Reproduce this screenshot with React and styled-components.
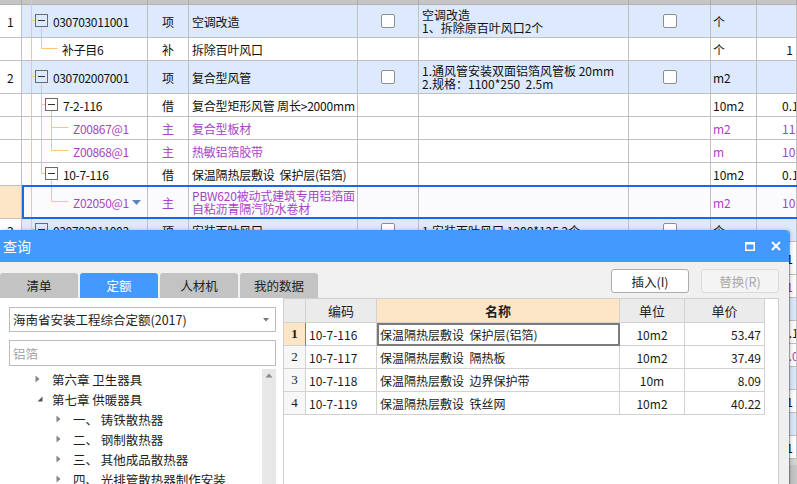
import React from "react";
import styled, { createGlobalStyle, css } from "styled-components";

const GlobalStyle = createGlobalStyle`
  html, body { margin: 0; padding: 0; background: #fff; }
  body {
    font-family: "Noto Sans CJK SC", "Noto Sans", sans-serif;
    overflow: hidden;
  }
  * { box-sizing: border-box; }
`;

const Screen = styled.div`
  position: relative;
  width: 797px;
  height: 484px;
  overflow: hidden;
  background: #fff;
`;

// ---------- background bill grid ----------
const COLS = "22px 126px 41px 169px 61px 210px 82px 46px 40px";
const LINE = "#c0c0c0";
const PURPLE = "#a545c4";

const Sheet = styled.div`
  display: flex;
  flex-direction: column;
  width: 797px;
  font-size: 12px;
  color: #111;
`;

const HeadRow = styled.div`
  display: grid;
  grid-template-columns: ${COLS};
  height: 5px;
  background: #c5c5c5;
`;

const HeadCell = styled.div`
  position: relative;
  border-right: 1px solid #a9a9a9;
  border-bottom: 1px solid #b3b3b3;
`;

const Row = styled.div`
  position: relative;
  display: grid;
  grid-template-columns: ${COLS};
  height: ${(p) => p.$h}px;
  background: ${(p) => (p.$blue ? "#dde9fc" : p.$sel ? "#fbfbfd" : "#fff")};
  ${(p) =>
    p.$sel &&
    css`
      &::after {
        content: "";
        position: absolute;
        left: 22px;
        right: -2px;
        top: -1px;
        bottom: 0;
        border: 2px solid #1769e9;
        pointer-events: none;
      }
    `}
`;

const Cell = styled.div`
  position: relative;
  display: flex;
  align-items: center;
  justify-content: ${(p) =>
    p.$align === "center" ? "center" : p.$align === "right" ? "flex-end" : "flex-start"};
  padding: 0 ${(p) => p.$pr ?? 3}px 0 ${(p) => p.$pl ?? 3}px;
  border-right: 1px solid ${LINE};
  border-bottom: 1px solid ${LINE};
  color: ${(p) => (p.$purple ? PURPLE : "#111")};
  white-space: pre;
  line-height: 13px;
  overflow: hidden;
`;

const CodeCell = styled(Cell)`
  letter-spacing: -0.35px;
`;

const NameCell = styled(Cell)`
  letter-spacing: -0.2px;
`;

const NumCell = styled(Cell)`
  background: ${(p) => (p.$sel ? "#fde6c8" : "#fff")};
  padding-left: 7px;
`;

const GuideSvg = styled.svg`
  position: absolute;
  left: 0;
  top: 0;
  overflow: visible;
  pointer-events: none;
`;

const Checkbox = styled.span`
  width: 14px;
  height: 14px;
  border: 1px solid #8e8e8e;
  border-radius: 2px;
  background: #fff;
`;

const GridFooter = styled.div`
  height: 30px;
  background: #c6c6c6;
  border-top: 6px solid #d4d4d4;
`;

const TREE_PAD = { root: 31, leaf: 40, sub: 41, subLast: 41, mat: 51, matLast: 51, matEnd: 51 };

function TreeGuide({ kind, h }) {
  const m = Math.floor((h - 1) / 2) - 0.5;
  const B = h;
  const bb = m + 6.5;
  const specs = {
    head: { segs: [[9, 0, 9, B]] },
    root: { segs: [[9, 0, 9, B], [9, m, 13, m], [19, bb, 19, B]], box: 13 },
    leaf: { segs: [[9, 0, 9, B], [19, 0, 19, m], [19, m, 35, m]] },
    sub: { segs: [[9, 0, 9, B], [19, 0, 19, B], [19, m, 23, m], [29, bb, 29, B]], box: 23 },
    subLast: { segs: [[9, 0, 9, B], [19, 0, 19, m], [19, m, 23, m], [29, bb, 29, B]], box: 23 },
    mat: { segs: [[9, 0, 9, B], [19, 0, 19, B], [29, 0, 29, B], [29, m, 46, m]] },
    matLast: { segs: [[9, 0, 9, B], [19, 0, 19, B], [29, 0, 29, m], [29, m, 46, m]] },
    matEnd: { segs: [[9, 0, 9, B], [29, 0, 29, m], [29, m, 46, m]] },
  };
  const s = specs[kind];
  return (
    <GuideSvg width="126" height={h}>
      {s.segs.map(([x1, y1, x2, y2], i) => (
        <line key={i} x1={x1 + 0.5} y1={y1} x2={x2 + 0.5} y2={y2} stroke="#ffc57a" strokeWidth="1" />
      ))}
      {s.box != null && (
        <g>
          <rect x={s.box + 0.5} y={m - 6} width="12" height="12" fill="none" stroke="#6b6b6b" />
          <line x1={s.box + 3} y1={m} x2={s.box + 10} y2={m} stroke="#333" />
        </g>
      )}
    </GuideSvg>
  );
}

const DropArrow = () => (
  <svg width="9" height="5" viewBox="0 0 9 5" style={{ marginLeft: "auto", flex: "none" }}>
    <polygon points="0,0 9,0 4.5,5" fill="#5b89bd" />
  </svg>
);

const bill = [
  { h: 33, num: "1", blue: true, tree: "root", code: "030703011001", type: "项", name: "空调改造", c1: true, desc: "空调改造\n1、拆除原百叶风口2个", c2: true, unit: "个" },
  { h: 23, tree: "leaf", code: "补子目6", type: "补", name: "拆除百叶风口", unit: "个", qty: "1", qtyEnd: true },
  { h: 33, num: "2", blue: true, tree: "root", code: "030702007001", type: "项", name: "复合型风管", c1: true, desc: "1.通风管安装双面铝箔风管板 20mm\n2.规格：1100*250  2.5m", c2: true, unit: "m2" },
  { h: 23, tree: "sub", code: "7-2-116", type: "借", name: "复合型矩形风管 周长>2000mm", unit: "10m2", qty: "0.137" },
  { h: 23, tree: "mat", purple: true, code: "Z00867@1", type: "主", name: "复合型板材", unit: "m2", qty: "11.53" },
  { h: 23, tree: "matLast", purple: true, code: "Z00868@1", type: "主", name: "热敏铝箔胶带", unit: "m", qty: "10.24" },
  { h: 23, tree: "subLast", code: "10-7-116", type: "借", name: "保温隔热层敷设  保护层(铝箔)", unit: "10m2", qty: "0.137" },
  { h: 33, sel: true, tree: "matEnd", purple: true, drop: true, code: "Z02050@1", type: "主", name: "PBW620被动式建筑专用铝箔面\n自粘沥青隔汽防水卷材", unit: "m2", qty: "10.56" },
  { h: 23, num: "3", blue: true, tree: "root", code: "030703011003", type: "项", name: "安装百叶风口", c1: true, desc: "1.安装百叶风口 1200*125 2个", c2: true, unit: "个" },
  { h: 33, tree: "leaf", code: "补子目7", type: "补", name: "安装百叶风口\n1200*125", unit: "个", qty: "1", qtyEnd: true },
  { h: 23, tree: "leaf", purple: true, code: "Z00871@1", type: "主", name: "百叶风口", unit: "个", qty: "1", qtyEnd: true },
  { h: 23, num: "4", blue: true, tree: "root", code: "030703007001", type: "项", name: "散流器", c1: true, desc: "1.安装散流器", c2: true, unit: "个" },
  { h: 23, tree: "leaf", code: "7-3-21", type: "借", name: "散流器安装", unit: "10个", qty: "0.1" },
  { h: 23, tree: "leaf", purple: true, code: "Z00880@1", type: "主", name: "散流器", unit: "个", qty: "1.0" },
  { h: 23, num: "5", blue: true, tree: "root", code: "030703011004", type: "项", name: "安装百叶风口", c1: true, desc: "", c2: true, unit: "个" },
  { h: 23, tree: "leaf", code: "补子目8", type: "补", name: "安装百叶风口", unit: "个", qty: "1", qtyEnd: true },
  { h: 23, num: "6", blue: true, tree: "root", code: "030703011005", type: "项", name: "安装百叶风口", c1: true, desc: "", c2: true, unit: "个" },
  { h: 23, tree: "leaf", code: "补子目9", type: "补", name: "安装百叶风口", unit: "个", qty: "1", qtyEnd: true },
];

function BillGrid() {
  return (
    <Sheet>
      <HeadRow>
        <HeadCell />
        <HeadCell>
          <TreeGuide kind="head" h={5} />
        </HeadCell>
        <HeadCell />
        <HeadCell />
        <HeadCell />
        <HeadCell />
        <HeadCell />
        <HeadCell />
        <HeadCell />
      </HeadRow>
      {bill.map((r, i) => (
        <Row key={i} $h={r.h} $blue={r.blue} $sel={r.sel}>
          <NumCell $sel={r.sel}>{r.num}</NumCell>
          <CodeCell $pl={TREE_PAD[r.tree]} $pr={6} $purple={r.purple}>
            <TreeGuide kind={r.tree} h={r.h} />
            {r.code}
            {r.drop && <DropArrow />}
          </CodeCell>
          <Cell $align="center" $purple={r.purple}>{r.type}</Cell>
          <NameCell $purple={r.purple}>{r.name}</NameCell>
          <Cell $align="center">{r.c1 && <Checkbox />}</Cell>
          <Cell>{r.desc}</Cell>
          <Cell $align="center">{r.c2 && <Checkbox />}</Cell>
          <Cell $pl={2} $purple={r.purple}>{r.unit}</Cell>
          <Cell
            $align={r.qtyEnd ? "right" : "left"}
            $pl={r.qtyEnd ? 0 : 25}
            $pr={r.qtyEnd ? 3 : 0}
            $purple={r.purple}
          >
            {r.qty}
          </Cell>
        </Row>
      ))}
      <GridFooter />
    </Sheet>
  );
}

// ---------- query dialog ----------
const Dialog = styled.section`
  position: absolute;
  left: 0;
  top: 230px;
  width: 789px;
  height: 270px;
  display: flex;
  flex-direction: column;
  background: #f0f0f0;
  border-top-right-radius: 4px;
  box-shadow: 1px 0 1px rgba(0, 0, 0, 0.35), 2px 0 5px rgba(0, 0, 0, 0.15);
  overflow: hidden;
`;

const TitleBar = styled.header`
  height: 32px;
  flex: none;
  display: flex;
  align-items: center;
  padding: 0 8px 0 3px;
  background: #4499ff;
  color: #fff;
  font-size: 14px;
`;

const WinButtons = styled.div`
  margin-left: auto;
  display: flex;
  align-items: center;
  gap: 16px;
`;

const Body = styled.div`
  flex: 1;
  min-height: 0;
  display: flex;
  flex-direction: column;
  padding: 7px 10px 0 0;
`;

const Toolbar = styled.div`
  height: 29px;
  flex: none;
  display: flex;
  align-items: flex-start;
`;

const Tabs = styled.div`
  align-self: flex-end;
  display: flex;
  gap: 2px;
`;

const Tab = styled.div`
  width: 78px;
  height: 25px;
  display: flex;
  align-items: center;
  justify-content: center;
  border-radius: 3px 3px 0 0;
  background: ${(p) => (p.$active ? "#4499ff" : "#c3c3c3")};
  color: ${(p) => (p.$active ? "#fff" : "#222")};
  font-size: 12.5px;
`;

const Actions = styled.div`
  margin-left: auto;
  display: flex;
  gap: 12px;
`;

const ActionButton = styled.div`
  width: 78px;
  height: 24px;
  display: flex;
  align-items: center;
  justify-content: center;
  border: 1px solid ${(p) => (p.$disabled ? "#d9d9d9" : "#adadad")};
  border-radius: 3px;
  background: ${(p) => (p.$disabled ? "#f4f4f4" : "#fff")};
  color: ${(p) => (p.$disabled ? "#a9a9a9" : "#222")};
  font-size: 12.5px;
`;

const Content = styled.div`
  flex: 1;
  min-height: 0;
  display: flex;
`;

const LeftPane = styled.div`
  width: 283px;
  flex: none;
  display: flex;
  flex-direction: column;
  padding: 9px 7px 0 9px;
  background: #fff;
`;

const Combo = styled.div`
  height: 25px;
  display: flex;
  align-items: center;
  padding: 0 6px 0 3px;
  border: 1px solid #bcbcbc;
  color: #222;
  font-size: 12.5px;
`;

const SearchBox = styled.div`
  height: 26px;
  margin-top: 8px;
  display: flex;
  align-items: center;
  padding: 0 3px;
  border: 1px solid #bcbcbc;
  color: #a3a3a3;
  font-size: 12.5px;
`;

const TreeArea = styled.div`
  flex: 1;
  margin-top: 3px;
  display: flex;
`;

const TreeList = styled.div`
  flex: 1;
`;

const TreeRow = styled.div`
  height: 20px;
  display: flex;
  align-items: center;
  padding-left: ${(p) => (p.$level ? 47 : 26)}px;
  color: #1e1e1e;
  font-size: 12.5px;
  white-space: pre;
`;

const Twisty = styled.span`
  width: 8px;
  height: 8px;
  flex: none;
  margin-right: 9px;
  display: flex;
  align-items: center;
  svg { flex: none; }
`;

const ScrollBar = styled.div`
  width: 14px;
  display: flex;
  justify-content: center;
  padding-top: 4px;
  background: #e7e7e7;
`;

const RightPane = styled.div`
  flex: 1;
  background: #fff;
  border: 1px solid #cfcfcf;
  border-bottom: none;
`;

const QCOLS = "22px 71px 243px 65px 80px";
const QLINE = "#d2d2d2";

const QHead = styled.div`
  display: grid;
  grid-template-columns: ${QCOLS};
  height: 24px;
`;

const QHeadCell = styled.div`
  display: flex;
  align-items: center;
  justify-content: center;
  border-right: 1px solid ${QLINE};
  border-bottom: 1px solid ${QLINE};
  background: ${(p) => (p.$hot ? "#fde6c8" : "#ebebeb")};
  color: #1e1e1e;
  font-size: 13px;
  font-weight: ${(p) => (p.$hot ? 700 : 400)};
`;

const QRow = styled.div`
  display: grid;
  grid-template-columns: ${QCOLS};
  height: 23px;
`;

const QCell = styled.div`
  display: flex;
  align-items: center;
  justify-content: ${(p) =>
    p.$align === "center" ? "center" : p.$align === "right" ? "flex-end" : "flex-start"};
  padding: 0 3px;
  border-right: 1px solid ${(p) => p.$edge || QLINE};
  border-bottom: 1px solid ${QLINE};
  color: #1a1a1a;
  font-size: 12px;
  white-space: pre;
  ${(p) =>
    p.$focus &&
    css`
      outline: 2px solid #7b7b7b;
      outline-offset: -2px;
    `}
`;

const QNum = styled(QCell)`
  justify-content: center;
  background: ${(p) => (p.$sel ? "#fde6c8" : "#f7f7f7")};
  font-family: "Liberation Serif", serif;
  font-size: 13px;
  font-weight: ${(p) => (p.$sel ? 700 : 400)};
`;

const quota = [
  { code: "10-7-116", name: "保温隔热层敷设  保护层(铝箔)", unit: "10m2", price: "53.47" },
  { code: "10-7-117", name: "保温隔热层敷设  隔热板", unit: "10m2", price: "37.49" },
  { code: "10-7-118", name: "保温隔热层敷设  边界保护带", unit: "10m", price: "8.09" },
  { code: "10-7-119", name: "保温隔热层敷设  铁丝网", unit: "10m2", price: "40.22" },
];

const chapters = [
  { level: 0, open: false, label: "第六章 卫生器具" },
  { level: 0, open: true, label: "第七章 供暖器具" },
  { level: 1, open: false, label: "一、 铸铁散热器" },
  { level: 1, open: false, label: "二、 钢制散热器" },
  { level: 1, open: false, label: "三、 其他成品散热器" },
  { level: 1, open: false, label: "四、 光排管散热器制作安装" },
];

function Arrow({ open }) {
  return open ? (
    <svg width="6" height="6" viewBox="0 0 6 6" style={{ marginLeft: 2 }}>
      <polygon points="5.5,0.5 5.5,5.5 0.5,5.5" fill="#555" />
    </svg>
  ) : (
    <svg width="5" height="8" viewBox="0 0 5 8">
      <polygon points="0.5,0.5 4.5,4 0.5,7.5" fill="#858585" />
    </svg>
  );
}

function QueryDialog() {
  return (
    <Dialog>
      <TitleBar>
        查询
        <WinButtons>
          <svg width="10" height="9" viewBox="0 0 10 9">
            <rect x="0.75" y="1" width="8.5" height="7.25" fill="none" stroke="#fff" strokeWidth="1.5" />
            <line x1="0" y1="1.25" x2="10" y2="1.25" stroke="#fff" strokeWidth="2.5" />
          </svg>
          <svg width="10" height="10" viewBox="0 0 10 10">
            <path d="M1 1L9 9M9 1L1 9" stroke="#fff" strokeWidth="2" />
          </svg>
        </WinButtons>
      </TitleBar>
      <Body>
        <Toolbar>
          <Tabs>
            <Tab>清单</Tab>
            <Tab $active>定额</Tab>
            <Tab>人材机</Tab>
            <Tab>我的数据</Tab>
          </Tabs>
          <Actions>
            <ActionButton>插入(I)</ActionButton>
            <ActionButton $disabled>替换(R)</ActionButton>
          </Actions>
        </Toolbar>
        <Content>
          <LeftPane>
            <Combo>
              海南省安装工程综合定额(2017)
              <svg width="6" height="4" viewBox="0 0 6 4" style={{ marginLeft: "auto" }}>
                <polygon points="0,0 6,0 3,3.5" fill="#777" />
              </svg>
            </Combo>
            <SearchBox>铝箔</SearchBox>
            <TreeArea>
              <TreeList>
                {chapters.map((c, i) => (
                  <TreeRow key={i} $level={c.level}>
                    <Twisty>
                      <Arrow open={c.open} />
                    </Twisty>
                    {c.label}
                  </TreeRow>
                ))}
              </TreeList>
              <ScrollBar>
                <svg width="8" height="5" viewBox="0 0 8 5">
                  <polygon points="0.5,4.5 7.5,4.5 4,0.5" fill="#8a8a8a" />
                </svg>
              </ScrollBar>
            </TreeArea>
          </LeftPane>
          <RightPane>
            <QHead>
              <QHeadCell />
              <QHeadCell>编码</QHeadCell>
              <QHeadCell $hot>名称</QHeadCell>
              <QHeadCell>单位</QHeadCell>
              <QHeadCell>单价</QHeadCell>
            </QHead>
            {quota.map((q, i) => (
              <QRow key={q.code}>
                <QNum $sel={i === 0} $edge={i === 0 ? "#3a8ee6" : undefined}>
                  {i + 1}
                </QNum>
                <QCell>{q.code}</QCell>
                <QCell $focus={i === 0}>{q.name}</QCell>
                <QCell $align="center">{q.unit}</QCell>
                <QCell $align="right">{q.price}</QCell>
              </QRow>
            ))}
          </RightPane>
        </Content>
      </Body>
    </Dialog>
  );
}

export default function App() {
  return (
    <>
      <GlobalStyle />
      <Screen>
        <BillGrid />
        <QueryDialog />
      </Screen>
    </>
  );
}
